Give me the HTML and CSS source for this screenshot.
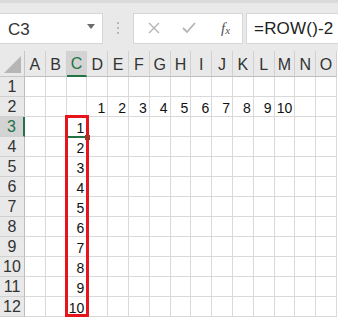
FILE: index.html
```
<!DOCTYPE html>
<html>
<head>
    <meta charset="UTF-8">
    <title>ROW()-2</title>
    <link rel="stylesheet" href="styles.css">
</head>
<body>
    <div class="formula-bar">
        <div class="name-box">
            <span>C3</span>
            <svg class="caret" width="8" height="5" viewBox="0 0 8 5"><path d="M0 0H8L4 5Z" fill="#6b6b6b"/></svg>
        </div>
        <div class="grip"><i></i><i></i><i></i></div>
        <div class="fn-box">
            <svg width="12" height="12" viewBox="0 0 12 12"><path d="M1 1L11 11M11 1L1 11" stroke="#b4b4b4" stroke-width="1.4"/></svg>
            <svg width="14" height="12" viewBox="0 0 14 12"><path d="M1 6L5 10L13 1" stroke="#b4b4b4" stroke-width="1.8" fill="none"/></svg>
            <span class="fx">f<sub>x</sub></span>
        </div>
        <div class="formula">=ROW()-2</div>
    </div>

    <div class="sheet" id="sheet"></div>

<script>
    var cols = "ABCDEFGHIJKLMNO".split("");
    var sheet = document.getElementById("sheet");

    function cell(cls, text, row, col) {
        var el = document.createElement("div");
        el.className = cls;
        if (text !== undefined) el.textContent = text;
        if (row) {
            el.style.gridRow = row;
            el.style.gridColumn = col;
        }
        sheet.appendChild(el);
        return el;
    }

    cell("corner", undefined, 1, 1).innerHTML = '<svg width="17" height="17" viewBox="0 0 17 17"><path d="M17 0V17H0Z" fill="#b6b6b6"/></svg>';
    cols.forEach(function (c, i) {
        cell(c === "C" ? "col-head active" : "col-head", c, 1, i + 2);
    });

    for (var r = 1; r <= 12; r++) {
        cell(r === 3 ? "row-head active" : "row-head", r, r + 1, 1);
        cols.forEach(function (c, i) {
            var value = "";
            if (r === 2 && i >= 3 && i <= 12) value = i - 2;
            if (c === "C" && r >= 3) value = r - 2;
            cell("cell", value, r + 1, i + 2);
        });
    }

    cell("marquee");
    cell("cursor-line");
    cell("fill-handle");
</script>
</body>
</html>
```

FILE: styles.css
```
html, body {
    margin: 0;
    padding: 0;
    background: #fff;
    font-family: "Liberation Sans", Arial, sans-serif;
    overflow: hidden;
}
.formula-bar {
    display: flex;
    align-items: center;
    height: 51px;
    padding-top: 2px;
    box-sizing: border-box;
    background: #e9e9e9;
    border-top: 3px solid #dadada;
}
.name-box {
    display: flex;
    align-items: center;
    justify-content: space-between;
    width: 103px;
    height: 31px;
    box-sizing: border-box;
    padding: 0 7px 0 8px;
    background: #fff;
    border: 1px solid #d6d6d6;
    border-left: 0;
    font-size: 17px;
    color: #333;
}
.name-box span {
    padding-top: 3px;
}
.caret {
    margin-top: -4px;
}
.grip {
    display: flex;
    flex-direction: column;
    gap: 3px;
    width: 30px;
    align-items: center;
}
.grip i {
    display: block;
    width: 2px;
    height: 2px;
    background: #b8b8b8;
}
.fn-box {
    display: flex;
    align-items: center;
    width: 110px;
    height: 31px;
    box-sizing: border-box;
    padding: 0 0 0 14px;
    gap: 22px;
    background: #fff;
    border: 1px solid #d6d6d6;
}
.fx {
    font-family: "Liberation Serif", serif;
    font-style: italic;
    font-size: 15px;
    color: #555;
    margin-left: 3px;
}
.fx sub {
    font-size: 11px;
    vertical-align: -1px;
}
.formula {
    flex: 1;
    height: 31px;
    box-sizing: border-box;
    margin-left: 3px;
    padding: 5px 0 0 7px;
    background: #fff;
    border: 1px solid #d6d6d6;
    border-right: 0;
    font-size: 17px;
    color: #222;
    letter-spacing: 0.2px;
}
.sheet {
    display: grid;
    grid-template-columns: 25px repeat(15, 20.8px);
    grid-template-rows: 26px repeat(12, 20px);
    background: #fff;
}
.corner {
    display: flex;
    align-items: flex-end;
    justify-content: flex-end;
    padding: 0 3px 3px 0;
    background: #e9e9e9;
    border-right: 1px solid #c6c6c6;
    border-bottom: 1px solid #c6c6c6;
}
.col-head,
.row-head {
    background: #e9e9e9;
    color: #333;
    font-size: 16px;
    box-sizing: border-box;
    display: flex;
    align-items: center;
    justify-content: center;
}
.col-head {
    border-right: 1px solid #d0d0d0;
    border-bottom: 1px solid #bdbdbd;
    padding-top: 2px;
}
.row-head {
    border-right: 1px solid #bdbdbd;
    border-bottom: 1px solid #d0d0d0;
}
.col-head.active {
    background: #d3d3d3;
    color: #217346;
    border-bottom: 2px solid #217346;
}
.row-head.active {
    background: #d3d3d3;
    color: #217346;
    border-right: 2px solid #217346;
}
.cell {
    border-right: 1px solid #d9d9d9;
    border-bottom: 1px solid #d9d9d9;
    box-sizing: border-box;
    font-size: 14px;
    color: #111;
    text-align: right;
    padding: 4px 2px 0 0;
    line-height: 15px;
}
.marquee {
    grid-column: 4;
    grid-row: 4 / 14;
    margin: -2px -2px 0 -2px;
    border: 3px solid #e8141b;
    z-index: 2;
}
.cursor-line {
    grid-column: 4;
    grid-row: 4;
    align-self: end;
    height: 2px;
    margin: 0 1px -1px 0;
    background: #217346;
    z-index: 1;
}
.fill-handle {
    grid-column: 4;
    grid-row: 4;
    align-self: end;
    justify-self: end;
    width: 5px;
    height: 5px;
    margin: 0 -3px -3px 0;
    background: #a4342a;
    z-index: 3;
}
```
